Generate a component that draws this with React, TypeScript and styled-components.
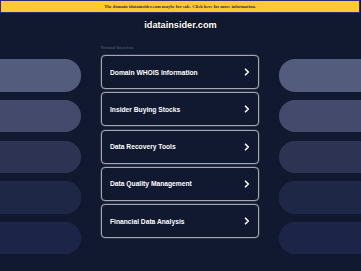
import React from "react";
import styled, { createGlobalStyle } from "styled-components";

const GlobalStyle = createGlobalStyle`
  html, body {
    margin: 0;
    padding: 0;
    background: #111930;
  }
  body {
    font-family: "Liberation Sans", Arial, sans-serif;
    width: 361px;
    height: 271px;
    overflow: hidden;
  }
`;

const Page = styled.div`
  width: 361px;
  height: 271px;
  background: #111930;
  display: flex;
  flex-direction: column;
  overflow: hidden;
`;

const Banner = styled.a`
  display: flex;
  align-items: center;
  justify-content: center;
  box-sizing: border-box;
  width: 360px;
  height: 13px;
  background: #ffca2e;
  border: 1px solid #2c2d70;
  font-family: "Liberation Serif", "Times New Roman", serif;
  font-weight: bold;
  font-size: 4.55px;
  color: #1f2a6e;
  text-decoration: none;
`;

const Title = styled.h1`
  margin: 0;
  height: 24px;
  display: flex;
  align-items: center;
  justify-content: center;
  font-family: "Liberation Sans", Arial, sans-serif;
  font-weight: bold;
  font-size: 9.2px;
  color: #ffffff;
  text-shadow: 0 0 2px #000;
`;

const Main = styled.div`
  margin-top: 7px;
  display: grid;
  grid-template-columns: 81px 158px 1fr;
  column-gap: 20px;
`;

const PillColumn = styled.div`
  display: flex;
  flex-direction: column;
  gap: 8.3px;
  padding-top: 15.3px;
  overflow: hidden;
`;

const Pill = styled.div<{ $side: "left" | "right"; $bg: string }>`
  height: 32.4px;
  background: ${(p) => p.$bg};
  border-radius: ${(p) => (p.$side === "left" ? "0 16px 16px 0" : "16px 0 0 16px")};
  box-shadow: inset 0 0 1px rgba(255, 255, 255, 0.08);
`;

const Center = styled.div`
  display: flex;
  flex-direction: column;
`;

const Label = styled.div`
  height: 8px;
  line-height: 8px;
  margin-bottom: 3px;
  font-size: 4.1px;
  color: #5b6274;
`;

const List = styled.div`
  display: flex;
  flex-direction: column;
  gap: 3.3px;
`;

const Card = styled.a`
  box-sizing: border-box;
  height: 34px;
  display: flex;
  align-items: center;
  justify-content: space-between;
  padding: 0 8px 0 8px;
  border: 1px solid #a3a7b0;
  border-radius: 4px;
  background: #111930;
  box-shadow: 0 0 0 0.5px #4a4f5c;
  color: #ffffff;
  font-weight: bold;
  font-size: 6.7px;
  text-decoration: none;
`;

const Chevron = () => (
  <svg width="6" height="8" viewBox="0 0 6 8">
    <polyline
      points="1.5,1.2 4.3,4 1.5,6.8"
      fill="none"
      stroke="#ffffff"
      strokeWidth="1.6"
      strokeLinecap="round"
      strokeLinejoin="round"
    />
  </svg>
);

const pillColors = ["#535c7c", "#434a6b", "#2c3353", "#1f2746", "#1c2547"];
const items = [
  "Domain WHOIS Information",
  "Insider Buying Stocks",
  "Data Recovery Tools",
  "Data Quality Management",
  "Financial Data Analysis",
];

export default function App() {
  return (
    <Page>
      <GlobalStyle />
      <Banner href="#">
        The domain idatainsider.com maybe for sale. Click here for more information.
      </Banner>
      <Title>idatainsider.com</Title>
      <Main>
        <PillColumn>
          {pillColors.map((c) => (
            <Pill key={c} $side="left" $bg={c} />
          ))}
        </PillColumn>
        <Center>
          <Label>Related Searches</Label>
          <List>
            {items.map((t) => (
              <Card key={t} href="#">
                <span>{t}</span>
                <Chevron />
              </Card>
            ))}
          </List>
        </Center>
        <PillColumn>
          {pillColors.map((c) => (
            <Pill key={c} $side="right" $bg={c} />
          ))}
        </PillColumn>
      </Main>
    </Page>
  );
}
